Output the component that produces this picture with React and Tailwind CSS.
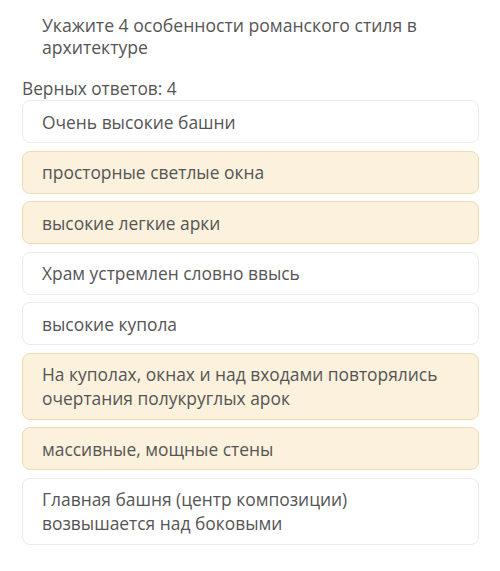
export default function App() {
  const items = [
    { t: "Очень высокие башни", s: false },
    { t: "просторные светлые окна", s: true },
    { t: "высокие легкие арки", s: true },
    { t: "Храм устремлен словно ввысь", s: false },
    { t: "высокие купола", s: false },
    { t: "На куполах, окнах и над входами повторялись очертания полукруглых арок", s: true },
    { t: "массивные, мощные стены", s: true },
    { t: "Главная башня (центр композиции) возвышается над боковыми", s: false },
  ];
  return (
    <div className="w-[500px] h-[571px] bg-white text-[#555] font-['Open_Sans',sans-serif] overflow-hidden">
      <div className="pl-[42px] pr-[60px] pt-[14px] text-[17.6px] leading-[22px]">
        Укажите 4 особенности романского стиля в архитектуре
      </div>
      <div className="pl-[22px] mt-[20px] text-[17.3px] leading-[22px]">Верных ответов: 4</div>
      <div className="flex flex-col gap-[7.5px] pl-[22px] pr-[21px] mt-[0px]">
        {items.map((it, i) => (
          <div
            key={i}
            className={
              "rounded-[8px] border pl-[19px] pr-[30px] py-[8.5px] text-[17.4px] leading-[24px] " +
              (it.s ? "bg-[#fbf1dd] border-[#ecdcb4]" : "bg-white border-[#ebebeb]")
            }
          >
            {it.t}
          </div>
        ))}
      </div>
    </div>
  );
}
